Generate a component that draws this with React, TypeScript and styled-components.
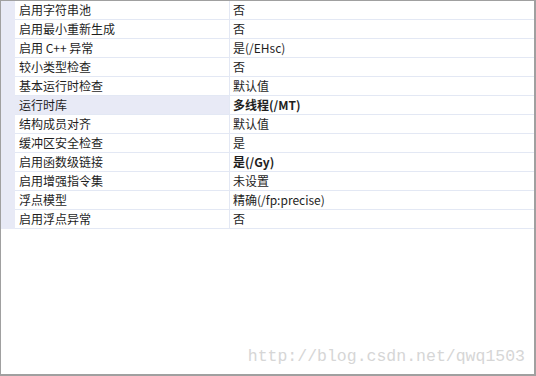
import styled, { createGlobalStyle } from "styled-components";

interface Property {
  name: string;
  value: string;
  bold?: boolean;
}

const properties: Property[] = [
  { name: "启用字符串池", value: "否" },
  { name: "启用最小重新生成", value: "否" },
  { name: "启用 C++ 异常", value: "是(/EHsc)" },
  { name: "较小类型检查", value: "否" },
  { name: "基本运行时检查", value: "默认值" },
  { name: "运行时库", value: "多线程(/MT)", bold: true },
  { name: "结构成员对齐", value: "默认值" },
  { name: "缓冲区安全检查", value: "是" },
  { name: "启用函数级链接", value: "是(/Gy)", bold: true },
  { name: "启用增强指令集", value: "未设置" },
  { name: "浮点模型", value: "精确(/fp:precise)" },
  { name: "启用浮点异常", value: "否" },
];

const SELECTED = 5;

const GlobalStyle = createGlobalStyle`
  html, body {
    margin: 0;
    padding: 0;
    background: #ffffff;
  }
`;

const App = () => {
  return (
    <>
      <GlobalStyle />
      <Frame>
        <Grid>
          {properties.map((p, i) => (
            <Row key={p.name}>
              <Gutter />
              <NameCell $selected={i === SELECTED}>{p.name}</NameCell>
              <ValueCell $bold={p.bold}>{p.value}</ValueCell>
            </Row>
          ))}
        </Grid>
        <Watermark>http://blog.csdn.net/qwq1503</Watermark>
      </Frame>
    </>
  );
};

export default App;

const Frame = styled.div`
  position: relative;
  box-sizing: border-box;
  width: 536px;
  height: 376px;
  background: #ffffff;
  border-top: 1px solid #a0a0a0;
  border-left: 1px solid #a0a0a0;
  border-right: 2px solid #a0a0a0;
  border-bottom: 2px solid #a0a0a0;
  font-family: "Noto Sans CJK SC", "Noto Sans", sans-serif;
  font-size: 12px;
  color: #1e1e1e;
`;

const Grid = styled.div`
  display: flex;
  flex-direction: column;
`;

const Row = styled.div`
  display: grid;
  grid-template-columns: 14px 215px 1fr;
  height: 19px;
`;

const Gutter = styled.div`
  background: #e8eaf6;
`;

const NameCell = styled.div<{ $selected?: boolean }>`
  padding-left: 4px;
  line-height: 18px;
  border-bottom: 1px solid #e3e8f4;
  border-right: 1px solid #e3e8f4;
  background: ${(p) => (p.$selected ? "#e8eaf6" : "#ffffff")};
  white-space: nowrap;
`;

const ValueCell = styled.div<{ $bold?: boolean }>`
  padding-left: 3px;
  line-height: 18px;
  border-bottom: 1px solid #e3e8f4;
  font-weight: ${(p) => (p.$bold ? 700 : 400)};
  white-space: nowrap;
`;

const Watermark = styled.div`
  position: absolute;
  right: 9px;
  bottom: 8px;
  font-family: "Liberation Mono", "DejaVu Sans Mono", monospace;
  font-size: 16.5px;
  color: #d6d6d6;
  letter-spacing: 0;
`;
